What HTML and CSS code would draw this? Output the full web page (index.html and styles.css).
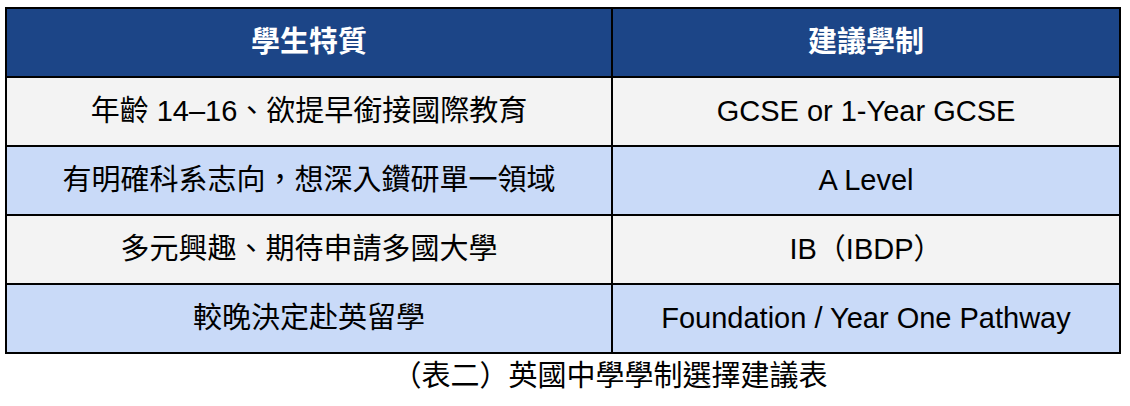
FILE: index.html
```html
<!DOCTYPE html>
<html lang="zh-Hant">
<head>
<meta charset="utf-8">
<title>英國中學學制選擇建議表</title>
<link rel="stylesheet" href="styles.css">
</head>
<body>
<div class="wrap">
  <div class="grid">
    <div class="cell head">學生特質</div>
    <div class="cell head">建議學制</div>
    <div class="cell gray">年齡 14–16、欲提早銜接國際教育</div>
    <div class="cell gray">GCSE or 1-Year GCSE</div>
    <div class="cell blue">有明確科系志向，想深入鑽研單一領域</div>
    <div class="cell blue">A Level</div>
    <div class="cell gray">多元興趣、期待申請多國大學</div>
    <div class="cell gray">IB（IBDP）</div>
    <div class="cell blue">較晚決定赴英留學</div>
    <div class="cell blue">Foundation / Year One Pathway</div>
  </div>
  <div class="caption">（表二）英國中學學制選擇建議表</div>
</div>
</body>
</html>
```

FILE: styles.css
```css
html, body {
  margin: 0;
  padding: 0;
  background: #ffffff;
}
body {
  font-family: "Liberation Sans", "Noto Sans CJK TC", sans-serif;
  font-size: 29px;
  color: #000000;
}
.wrap {
  padding: 7px 0 0 5px;
  width: 1116px;
}
.grid {
  display: grid;
  grid-template-columns: 604px 506px;
  grid-auto-rows: 67px;
  gap: 2px;
  padding: 2px;
  background: #000000;
}
.cell {
  display: flex;
  align-items: center;
  justify-content: center;
  white-space: nowrap;
  line-height: 1;
}
.head {
  background: #1c4587;
  color: #ffffff;
  font-weight: bold;
}
.gray {
  background: #f3f3f3;
}
.blue {
  background: #c9daf8;
}
.caption {
  text-align: center;
  padding-left: 94px;
  line-height: 1;
  margin-top: 8px;
}
```
